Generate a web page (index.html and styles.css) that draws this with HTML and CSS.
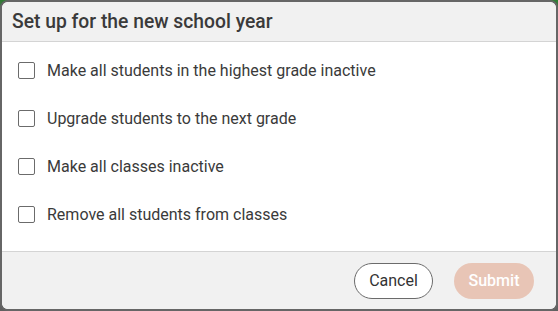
FILE: index.html
```html
<!DOCTYPE html>
<html>
<head>
<meta charset="utf-8">
<link rel="stylesheet" href="styles.css">
</head>
<body>
<div class="dialog">
  <div class="header">
    <h1 class="title">Set up for the new school year</h1>
  </div>
  <div class="content">
    <label class="row"><span class="box"></span><span class="label">Make all students in the highest grade inactive</span></label>
    <label class="row"><span class="box"></span><span class="label">Upgrade students to the next grade</span></label>
    <label class="row"><span class="box"></span><span class="label">Make all classes inactive</span></label>
    <label class="row"><span class="box"></span><span class="label">Remove all students from classes</span></label>
  </div>
  <div class="footer">
    <button class="btn cancel">Cancel</button>
    <button class="btn submit">Submit</button>
  </div>
</div>
</body>
</html>
```

FILE: styles.css
```css
* { box-sizing: border-box; }
html, body { margin: 0; padding: 0; }
body {
  width: 558px;
  height: 311px;
  background: linear-gradient(to bottom, #2e7d32 0px, #5a6a5a 12px, #606060 30px, #606060 100%);
  font-family: Roboto, "Liberation Sans", sans-serif;
  overflow: hidden;
}
.dialog {
  width: 558px;
  height: 311px;
  border: 2px solid #666;
  border-radius: 8px;
  background: #fff;
  overflow: hidden;
  display: flex;
  flex-direction: column;
}
.header {
  height: 40px;
  background: #f1f1f1;
  border-bottom: 1px solid #d4d4d4;
  display: flex;
  align-items: center;
  padding-left: 10px;
  flex-shrink: 0;
}
.title {
  margin: 0;
  font-size: 19.3px;
  font-weight: 500;
  color: #3a3a3a;
}
.content {
  flex: 1;
  padding: 4px 0 0 16px;
  display: flex;
  flex-direction: column;
}
.row {
  height: 48px;
  display: flex;
  align-items: center;
}
.box {
  width: 17px;
  height: 17px;
  border: 1.5px solid #6b6b6b;
  border-radius: 2px;
  margin-right: 12px;
  flex-shrink: 0;
}
.label {
  font-size: 16px;
  color: #3a3a3a;
}
.footer {
  height: 58px;
  background: #f1f1f1;
  border-top: 1px solid #d4d4d4;
  display: flex;
  justify-content: flex-end;
  align-items: center;
  gap: 21px;
  padding-right: 22px;
  flex-shrink: 0;
}
.btn {
  height: 36px;
  border-radius: 18px;
  font-family: Roboto, "Liberation Sans", sans-serif;
  font-size: 16px;
  padding: 0;
}
.cancel {
  width: 79px;
  margin-left: 1px;
  background: #fff;
  border: 1px solid #6b6b6b;
  color: #333;
}
.submit {
  width: 80px;
  background: #e8c5b6;
  border: none;
  color: #fff;
  font-weight: 500;
}
```
